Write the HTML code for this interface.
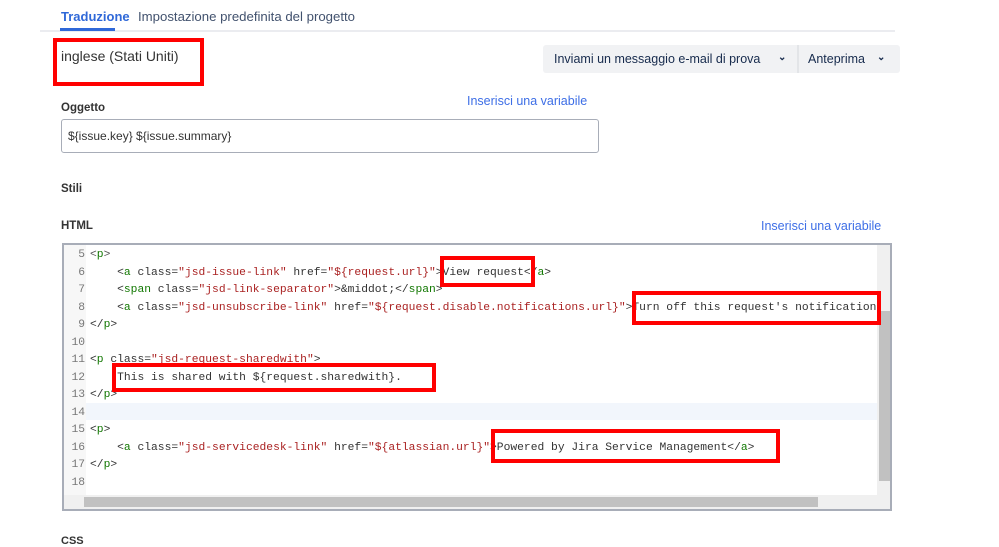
<!DOCTYPE html>
<html><head><meta charset="utf-8"><style>
body{margin:0;width:999px;height:540px;background:#fff;font-family:"Liberation Sans",sans-serif;position:relative;overflow:hidden;color:#172b4d}
.a{position:absolute}
.tab{font-size:13px;top:9px}
.lbl{font-size:11.5px;font-weight:bold;color:#333}
.link{color:#3d6ee6;font-size:12.5px}
.red{position:absolute;border:4px solid #f00;box-sizing:border-box}
.code{position:absolute;left:62px;top:243px;width:830px;height:268px;border:2px solid #a8adb8;box-sizing:border-box;background:#fff;overflow:hidden}
.ln{position:absolute;left:0;width:21px;text-align:right;color:#777;font-family:"Liberation Mono",monospace;font-size:11.3px}
.cl{position:absolute;left:26px;white-space:pre;font-family:"Liberation Mono",monospace;font-size:11.3px;color:#333}
.t{color:#170}.s{color:#a22}.g{color:#555}
</style></head><body>
<div class="a tab" style="left:61px;color:#2f68d8;font-weight:bold">Traduzione</div>
<div class="a tab" style="left:138px;color:#42526e;font-size:13.2px">Impostazione predefinita del progetto</div>
<div class="a" style="left:40px;top:30px;width:855px;height:2px;background:#ebecf0"></div>
<div class="a" style="left:60px;top:28px;width:55px;height:3px;background:#2f68d8"></div>
<div class="a" style="left:61px;top:48px;font-size:14px;color:#333">inglese (Stati Uniti)</div>
<div class="red" style="left:53px;top:38px;width:151px;height:48px"></div>
<div class="a" style="left:543px;top:45px;width:357px;height:28px;background:#f1f2f4;border-radius:3px"></div>
<div class="a" style="left:797px;top:45px;width:2px;height:28px;background:#e3e5e8"></div>
<div class="a" style="left:554px;top:52px;font-size:12.5px;color:#172b4d">Inviami un messaggio e-mail di prova</div>
<div class="a" style="left:778px;top:52px;font-size:10px;font-weight:bold">&#8964;</div>
<div class="a" style="left:808px;top:52px;font-size:12.5px">Anteprima</div>
<div class="a" style="left:877px;top:52px;font-size:10px;font-weight:bold">&#8964;</div>
<div class="a lbl" style="left:61px;top:102px">Oggetto</div>
<div class="a link" style="left:467px;top:94px">Inserisci una variabile</div>
<div class="a" style="left:61px;top:119px;width:538px;height:34px;border:1px solid #a8adb8;border-radius:3px;box-sizing:border-box"></div>
<div class="a" style="left:68px;top:129px;font-size:12px;color:#333">${issue.key} ${issue.summary}</div>
<div class="a lbl" style="left:61px;top:183px">Stili</div>
<div class="a lbl" style="left:61px;top:220px">HTML</div>
<div class="a link" style="left:761px;top:219px">Inserisci una variabile</div>
<div class="code">
<div class="a" style="left:0;top:0;width:22px;height:264px;background:#f7f7f7"></div>
<div class="a" style="left:22px;top:158px;width:792px;height:17px;background:#f2f6fc"></div>
<div class="ln" style="top:4px">5</div><div class="cl" style="top:4px"><span class="g">&lt;</span><span class="t">p</span><span class="g">&gt;</span></div>
<div class="ln" style="top:21.5px">6</div><div class="cl" style="top:21.5px">    &lt;<span class="t">a</span> class=<span class="s">"jsd-issue-link"</span> href=<span class="s">"${request.url}"</span>&gt;View request&lt;/<span class="t">a</span>&gt;</div>
<div class="ln" style="top:39px">7</div><div class="cl" style="top:39px">    &lt;<span class="t">span</span> class=<span class="s">"jsd-link-separator"</span>&gt;&amp;middot;&lt;/<span class="t">span</span>&gt;</div>
<div class="ln" style="top:56.5px">8</div><div class="cl" style="top:56.5px">    &lt;<span class="t">a</span> class=<span class="s">"jsd-unsubscribe-link"</span> href=<span class="s">"${request.disable.notifications.url}"</span>&gt;Turn off this request's notifications</div>
<div class="ln" style="top:74px">9</div><div class="cl" style="top:74px">&lt;/<span class="t">p</span>&gt;</div>
<div class="ln" style="top:91.5px">10</div>
<div class="ln" style="top:109px">11</div><div class="cl" style="top:109px">&lt;<span class="t">p</span> class=<span class="s">"jsd-request-sharedwith"</span>&gt;</div>
<div class="ln" style="top:126.5px">12</div><div class="cl" style="top:126.5px">    This is shared with ${request.sharedwith}.</div>
<div class="ln" style="top:144px">13</div><div class="cl" style="top:144px">&lt;/<span class="t">p</span>&gt;</div>
<div class="ln" style="top:161.5px">14</div>
<div class="ln" style="top:179px">15</div><div class="cl" style="top:179px">&lt;<span class="t">p</span>&gt;</div>
<div class="ln" style="top:196.5px">16</div><div class="cl" style="top:196.5px">    &lt;<span class="t">a</span> class=<span class="s">"jsd-servicedesk-link"</span> href=<span class="s">"${atlassian.url}"</span>&gt;Powered by Jira Service Management&lt;/<span class="t">a</span>&gt;</div>
<div class="ln" style="top:214px">17</div><div class="cl" style="top:214px">&lt;/<span class="t">p</span>&gt;</div>
<div class="ln" style="top:231.5px">18</div>
<div class="a" style="left:813px;top:0;width:15px;height:264px;background:#f0f0f0"></div>
<div class="a" style="left:815px;top:66px;width:11px;height:170px;background:#c1c1c1"></div>
<div class="a" style="left:0;top:250px;width:828px;height:14px;background:#f0f0f0"></div>
<div class="a" style="left:20px;top:252px;width:734px;height:10px;background:#c1c1c1"></div>
</div>
<div class="red" style="left:440px;top:256px;width:95px;height:31px"></div>
<div class="red" style="left:632px;top:291px;width:249px;height:34px"></div>
<div class="red" style="left:112px;top:363px;width:324px;height:29px"></div>
<div class="red" style="left:491px;top:429px;width:289px;height:34px"></div>
<div class="a" style="left:61px;top:535px;font-size:11px;font-weight:bold;color:#333">CSS</div>
</body></html>
